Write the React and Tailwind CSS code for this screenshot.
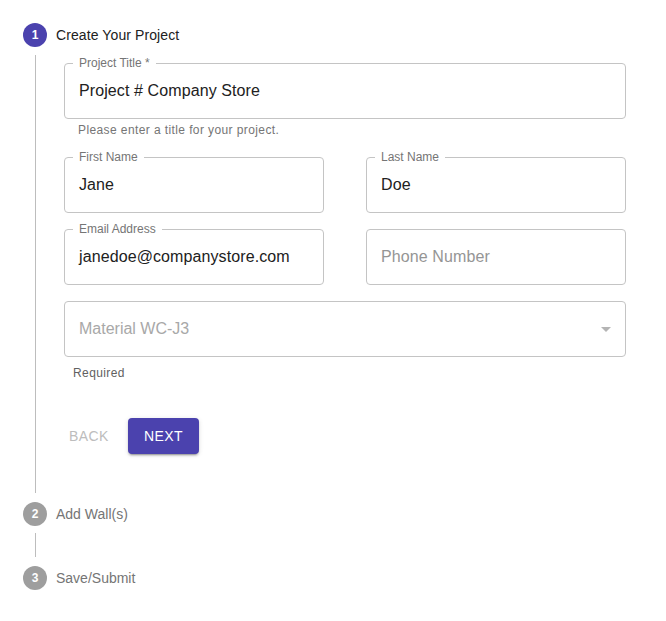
import React from "react";

function Field({ label, value, placeholder }) {
  return (
    <div className="relative h-[56px] rounded-[4px] border border-[#c4c4c4]">
      {label && (
        <span className="absolute left-[8px] top-[-1px] -translate-y-1/2 bg-white px-[6px] text-[12px] leading-[12px] text-[#757575]">
          {label}
        </span>
      )}
      <div className="flex h-full items-center pl-[14px]">
        {value ? (
          <span className="text-[16px] tracking-[0.1px] text-[#212121]">{value}</span>
        ) : (
          <span className="text-[16px] tracking-[0.1px] text-[#959595]">{placeholder}</span>
        )}
      </div>
    </div>
  );
}

function Circle({ n, active }) {
  return (
    <div
      className={
        "flex h-[24px] w-[24px] shrink-0 items-center justify-center rounded-full text-[12px] font-bold text-white " +
        (active ? "bg-[#4b42ae]" : "bg-[#9e9e9e]")
      }
    >
      {n}
    </div>
  );
}

export default function App() {
  return (
    <div
      className="w-[666px] bg-white pb-[31px] pl-[23px] pr-[40px] pt-[23px]"
      style={{ fontFamily: '"Liberation Sans", Arial, sans-serif' }}
    >
      <div className="flex items-center gap-[9px]">
        <Circle n={1} active />
        <span className="text-[14px] tracking-[0.1px] text-[#212121]">Create Your Project</span>
      </div>

      <div className="ml-[12px] mt-[8px] border-l border-[#bdbdbd] pb-[39px] pl-[28px] pt-[8px]">
        <Field label="Project Title *" value="Project # Company Store" />
        <div className="ml-[14px] mt-[3px] text-[12px] leading-[16px] tracking-[0.4px] text-[#757575]">
          Please enter a title for your project.
        </div>

        <div className="mt-[19px] grid grid-cols-2 gap-x-[42px] gap-y-[16px]">
          <Field label="First Name" value="Jane" />
          <Field label="Last Name" value="Doe" />
          <Field label="Email Address" value="janedoe@companystore.com" />
          <Field placeholder="Phone Number" />
        </div>

        <div className="relative mt-[16px] flex h-[56px] items-center rounded-[4px] border border-[#c4c4c4] pl-[14px]">
          <span className="text-[16px] text-[#a8a8a8]">Material WC-J3</span>
          <svg
            className="absolute right-[7px] top-1/2 -translate-y-1/2"
            width="24"
            height="24"
            viewBox="0 0 24 24"
          >
            <path d="M7 10l5 5 5-5z" fill="#b4b4b4" />
          </svg>
        </div>
        <div className="ml-[9px] mt-[8px] text-[12px] leading-[16px] tracking-[0.4px] text-[#616161]">
          Required
        </div>

        <div className="mt-[37px] flex items-center gap-[8px]">
          <button className="h-[36px] w-[56px] pl-[5px] text-left text-[14px] uppercase tracking-[0.4px] text-[#bdbdbd]">
            Back
          </button>
          <button className="h-[36px] rounded-[4px] bg-[#4b42ae] px-[16px] text-[14px] uppercase tracking-[0.4px] text-white shadow-[0_3px_1px_-2px_rgba(0,0,0,0.2),0_2px_2px_0_rgba(0,0,0,0.14),0_1px_5px_0_rgba(0,0,0,0.12)]">
            Next
          </button>
        </div>
      </div>

      <div className="mt-[9px] flex items-center gap-[9px]">
        <Circle n={2} />
        <span className="text-[14px] text-[#757575]">Add Wall(s)</span>
      </div>
      <div className="ml-[12px] mt-[7px] mb-[9px] h-[24px] border-l border-[#bdbdbd]" />
      <div className="flex items-center gap-[9px]">
        <Circle n={3} />
        <span className="text-[14px] text-[#757575]">Save/Submit</span>
      </div>
    </div>
  );
}
